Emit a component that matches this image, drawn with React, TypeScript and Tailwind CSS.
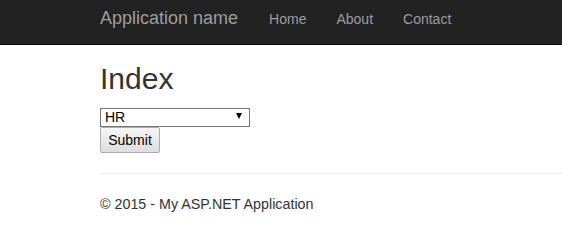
import React from "react";

export default function App() {
  return (
    <div className="w-[562px] h-[252px] overflow-hidden bg-white text-[#333] font-['Liberation_Sans',Arial,sans-serif] text-[14px]">
      <div className="h-[45px] bg-[#222] border-b border-[#080808] flex items-baseline pt-[8px] pl-[100px]">
        <span className="text-[18px] text-[#9d9d9d] leading-[20px]">Application name</span>
        <span className="ml-[31px] text-[#9d9d9d] leading-[20px]">Home</span>
        <span className="ml-[30px] text-[#9d9d9d] leading-[20px]">About</span>
        <span className="ml-[30px] text-[#9d9d9d] leading-[20px]">Contact</span>
      </div>
      <div className="pl-[100px]">
        <h2 className="mt-[17px] text-[30px] leading-[33px] font-normal">Index</h2>
        <div className="mt-[12px] relative w-[150px] h-[19px]">
          <select className="appearance-none w-[150px] h-[19px] border border-[#767676] bg-white text-[14px] leading-[17px] pl-[4px] text-black rounded-none outline-none">
            <option>HR</option>
          </select>
          <svg className="absolute right-[8px] top-[6px] pointer-events-none" width="6" height="6" viewBox="0 0 6 6">
            <polygon points="0,0 6,0 3,6" fill="#000" />
          </svg>
        </div>
        <button className="mt-[1px] w-[60px] h-[26px] border border-[#adadad] rounded-[2px] bg-gradient-to-b from-[#f6f6f6] to-[#dddddd] text-black text-[14px] leading-[20px] flex items-center justify-center">
          Submit
        </button>
        <div className="mt-[20px] h-px bg-[#eeeeee]" />
        <p className="mt-[20px] leading-[20px] text-[14.3px]">© 2015 - My ASP.NET Application</p>
      </div>
    </div>
  );
}
